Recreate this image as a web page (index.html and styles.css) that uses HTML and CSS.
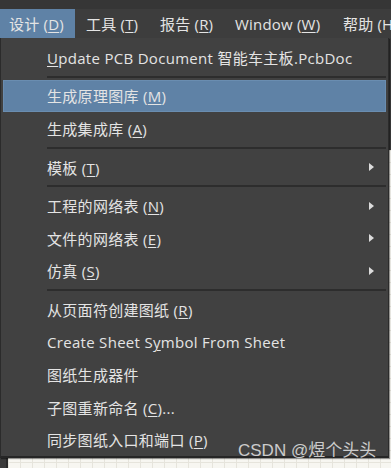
FILE: index.html
```html
<!DOCTYPE html>
<html lang="zh-CN">
<head>
<meta charset="utf-8">
<title>设计菜单</title>
<link rel="stylesheet" href="styles.css">
</head>
<body>
<div class="app">
  <div class="topstrip"></div>
  <nav class="menubar">
    <span class="mb-item active w1">设计 (<u>D</u>)</span>
    <span class="mb-item w2">工具 (<u>T</u>)</span>
    <span class="mb-item w3">报告 (<u>R</u>)</span>
    <span class="mb-item w4">Window (<u>W</u>)</span>
    <span class="mb-item w5">帮助 (H</span>
  </nav>
  <div class="workspace">
    <div class="side-dark"></div>
    <div class="canvas"></div>
  </div>

  <div class="menu">
    <div class="item"><span class="label"><u>U</u>pdate PCB Document 智能车主板.PcbDoc</span></div>
    <div class="sep"></div>
    <div class="item hl"><span class="label">生成原理图库 (<u>M</u>)</span></div>
    <div class="item"><span class="label">生成集成库 (<u>A</u>)</span></div>
    <div class="sep"></div>
    <div class="item"><span class="label">模板 (<u>T</u>)</span><span class="arrow"></span></div>
    <div class="sep"></div>
    <div class="item"><span class="label">工程的网络表 (<u>N</u>)</span><span class="arrow"></span></div>
    <div class="item"><span class="label">文件的网络表 (<u>E</u>)</span><span class="arrow"></span></div>
    <div class="item"><span class="label">仿真 (<u>S</u>)</span><span class="arrow"></span></div>
    <div class="sep"></div>
    <div class="item"><span class="label">从页面符创建图纸 (<u>R</u>)</span></div>
    <div class="item"><span class="label">Create Sheet S<u>y</u>mbol From Sheet</span></div>
    <div class="item"><span class="label">图纸生成器件</span></div>
    <div class="item"><span class="label">子图重新命名 (<u>C</u>)...</span></div>
    <div class="item"><span class="label">同步图纸入口和端口 (<u>P</u>)</span></div>
  </div>

  <div class="watermark">CSDN @煜个头头</div>
</div>
</body>
</html>
```

FILE: styles.css
```css
* { box-sizing: border-box; }
html, body {
  margin: 0;
  padding: 0;
  width: 391px;
  height: 468px;
  overflow: hidden;
  background: #3a3a3a;
}
.app {
  position: relative;
  width: 391px;
  height: 468px;
  display: flex;
  flex-direction: column;
  font-family: "Open Sans", "Noto Sans CJK SC", sans-serif;
  color: #e4e4e4;
}
.topstrip {
  height: 9px;
  background: #363636;
}
.menubar {
  height: 29px;
  background: #3d3d3d;
  display: flex;
  align-items: stretch;
  font-size: 15px;
  letter-spacing: 0.2px;
}
.mb-item {
  display: flex;
  align-items: center;
  padding-left: 11px;
  white-space: nowrap;
  flex: none;
}
.mb-item.active {
  background: #5f82a6;
}
.w1 { width: 75px; padding-left: 9px; }
.w2 { width: 74px; }
.w3 { width: 75px; }
.w4 { width: 108px; }
.w5 { width: 59px; }
u {
  text-decoration: underline;
  text-decoration-thickness: 1px;
  text-underline-offset: 2px;
}
.workspace {
  flex: 1;
  display: flex;
  flex-direction: column;
}
.side-dark {
  height: 112px;
  background: #3a3a3a;
}
.canvas {
  flex: 1;
  background-color: #f7f6f1;
  background-image:
    linear-gradient(to right, #e6e4dc 1px, transparent 1px),
    linear-gradient(to bottom, #e6e4dc 1px, transparent 1px);
  background-size: 12px 12px;
  border-left: 2px solid #2a2a2a;
  margin-left: 6px;
}

.menu {
  position: absolute;
  left: 0;
  top: 38px;
  width: 389px;
  height: 420px;
  background: #414141;
  border: 1px solid #2b2b2b;
  border-top: 0;
  border-bottom: 2px solid #262626;
  padding: 3px 2px 0 2px;
  font-size: 15px;
  letter-spacing: 0.3px;
  box-shadow: 1px 1px 1px rgba(0,0,0,0.4);
}
.item {
  height: 32.6px;
  display: flex;
  align-items: center;
  padding-left: 44px;
  padding-right: 12px;
  white-space: nowrap;
}
.item.hl {
  background: #5f82a6;
  outline: 1px solid #6a8db0;
  outline-offset: -1px;
}
.label { flex: 1; }
.arrow {
  width: 0;
  height: 0;
  border-top: 4px solid transparent;
  border-bottom: 4px solid transparent;
  border-left: 5px solid #dcdcdc;
}
.sep {
  height: 6px;
  margin-left: 44px;
  padding-top: 2px;
}
.sep::before {
  content: "";
  display: block;
  height: 2px;
  background: #2d2d2d;
}
.watermark {
  position: absolute;
  left: 238px;
  top: 436px;
  font-family: "Liberation Sans", "Noto Sans CJK SC", sans-serif;
  font-size: 17px;
  color: rgba(230, 230, 230, 0.85);
  white-space: nowrap;
}
```
